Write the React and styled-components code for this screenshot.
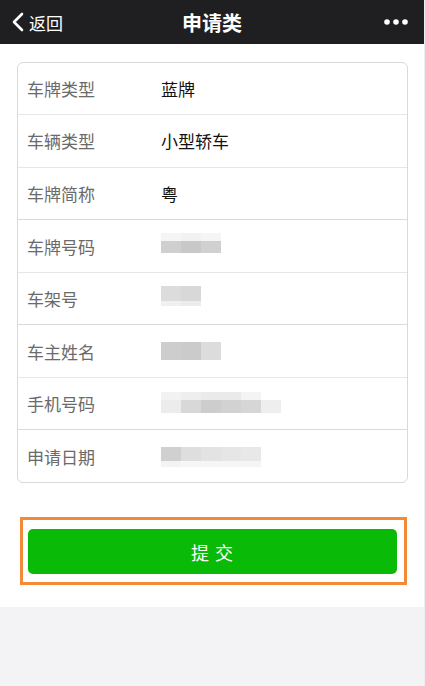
import React from "react";
import styled, { createGlobalStyle } from "styled-components";

const Global = createGlobalStyle`
  html, body { margin: 0; padding: 0; }
  body {
    background: #f3f3f5;
    font-family: "Noto Sans CJK SC", "Noto Sans", sans-serif;
    -webkit-font-smoothing: antialiased;
  }
  #root { min-height: 686px; }
`;

const Page = styled.div`
  width: 424px;
  min-height: 686px;
  background: #f3f3f5;
  border-right: 1px solid #eceef3;
`;

const Header = styled.header`
  height: 44px;
  background: #1f1f21;
  display: grid;
  grid-template-columns: 1fr auto 1fr;
  align-items: center;
  color: #fff;
`;

const Back = styled.div`
  display: flex;
  align-items: center;
  gap: 4px;
  padding-left: 11px;
  font-size: 17px;
  line-height: 1;
`;

const Title = styled.h1`
  margin: 0;
  font-size: 20px;
  font-weight: 700;
  letter-spacing: 0;
`;

const More = styled.div`
  display: flex;
  justify-content: flex-end;
  padding-right: 16px;
`;

const Content = styled.main`
  background: #fff;
  padding: 18px 16px 22px 17px;
`;

const Card = styled.section`
  border: 1px solid #d9d9d9;
  border-radius: 6px;
  overflow: hidden;
`;

const Row = styled.div`
  display: flex;
  align-items: center;
  height: 51.55px;
  padding-left: 9px;
  border-top: 1px solid ${(p) => (p.$dark ? "#dadada" : "#e6e6e6")};
  &:first-child { border-top: none; height: 51.2px; }
`;

const Label = styled.span`
  width: 134px;
  flex: none;
  font-size: 17px;
  line-height: 1;
  color: #6a6a6a;
`;

const Value = styled.span`
  font-size: 17px;
  line-height: 1;
  color: #111;
`;

const Blur = styled.div`
  display: flex;
  flex-direction: column;
  margin-top: ${(p) => p.$dy || 0}px;
`;

const Band = styled.div`
  display: flex;
`;

const Cell = styled.div`
  width: 20px;
  height: ${(p) => p.$h}px;
`;

const Annot = styled.div`
  margin-top: 34px;
  margin-left: 3px;
  margin-right: 1px;
  border: 3px solid #f28a37;
  padding: 9px 7px 8px 5px;
`;

const Submit = styled.button`
  display: block;
  width: 100%;
  height: 45px;
  border: none;
  border-radius: 5px;
  background: #09bb07;
  color: #fff;
  font-family: inherit;
  font-size: 18px;
  letter-spacing: 1px;
  cursor: pointer;
`;

const Pixel = ({ bands, dy }) => (
  <Blur $dy={dy}>
    {bands.map((b, i) => (
      <Band key={i}>
        {b.c.map((c, j) => (
          <Cell key={j} $h={b.h} style={{ background: c }} />
        ))}
      </Band>
    ))}
  </Blur>
);

const rows = [
  { label: "车牌类型", value: "蓝牌" },
  { label: "车辆类型", value: "小型轿车" },
  { label: "车牌简称", value: "粤", dark: false },
  {
    label: "车牌号码",
    dark: true,
    blur: {
      dy: -6,
      bands: [
        { h: 8, c: ["#f5f5f5", "#f2f2f2", "#f5f5f5"] },
        { h: 12, c: ["#cfcfcf", "#c8c8c8", "#d0d0d0"] },
      ],
    },
  },
  {
    label: "车架号",
    blur: {
      dy: -6,
      bands: [
        { h: 15, c: ["#dcdcdc", "#d8d8d8"] },
        { h: 5, c: ["#f0f0f0", "#ececec"] },
      ],
    },
  },
  {
    label: "车主姓名",
    dark: true,
    blur: {
      dy: 0,
      bands: [{ h: 18, c: ["#cdcdcd", "#cbcbcb", "#dcdcdc"] }],
    },
  },
  {
    label: "手机号码",
    blur: {
      dy: -2,
      bands: [
        { h: 8, c: ["#f2f2f2", "#eeeeee", "#eaeaea", "#eaeaea", "#f4f4f4", "#ffffff"] },
        { h: 13, c: ["#ececec", "#d8d8d8", "#cdcdcd", "#d2d2d2", "#d6d6d6", "#eeeeee"] },
      ],
    },
  },
  {
    label: "申请日期",
    dark: true,
    blur: {
      dy: 2,
      bands: [
        { h: 14, c: ["#d0d0d0", "#dedede", "#e3e3e3", "#e6e6e6", "#e8e8e8"] },
        { h: 6, c: ["#f3f3f3", "#f6f6f6", "#f6f6f6", "#f6f6f6", "#f5f5f5"] },
      ],
    },
  },
];

export default function App() {
  return (
    <>
      <Global />
      <Page>
        <Header>
          <Back>
            <svg width="14" height="20" viewBox="0 0 14 20">
              <polyline
                points="11,2 3,10 11,18"
                fill="none"
                stroke="#fff"
                strokeWidth="2.6"
                strokeLinecap="round"
                strokeLinejoin="round"
              />
            </svg>
            <span>返回</span>
          </Back>
          <Title>申请类</Title>
          <More>
            <svg width="24" height="6" viewBox="0 0 24 6">
              <circle cx="3" cy="3" r="2.8" fill="#fff" />
              <circle cx="12" cy="3" r="2.8" fill="#fff" />
              <circle cx="21" cy="3" r="2.8" fill="#fff" />
            </svg>
          </More>
        </Header>
        <Content>
          <Card>
            {rows.map((r) => (
              <Row key={r.label} $dark={r.dark}>
                <Label>{r.label}</Label>
                {r.value ? <Value>{r.value}</Value> : <Pixel {...r.blur} />}
              </Row>
            ))}
          </Card>
          <Annot>
            <Submit>提 交</Submit>
          </Annot>
        </Content>
      </Page>
    </>
  );
}
